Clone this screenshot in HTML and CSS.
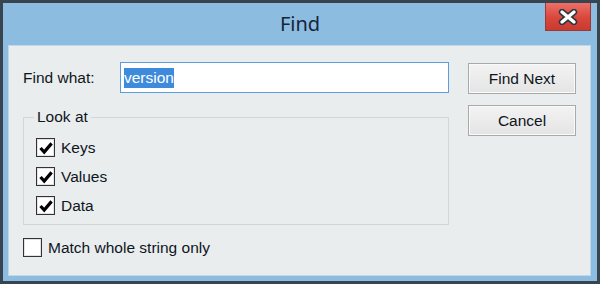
FILE: index.html
```html
<!DOCTYPE html>
<html>
<head>
    <title>Find</title>
    <link rel="stylesheet" href="styles.css">
</head>
<body>
    <div class="window">
        <div class="titlebar">
            <span></span>
            <span class="title">Find</span>
            <button class="close" title="Close">
                <svg width="20" height="16" viewBox="0 0 20 16">
                    <path d="M4 3 L16 13 M16 3 L4 13" stroke="#2b3540" stroke-width="6.4" stroke-linecap="round" fill="none"/>
                    <path d="M4 3 L16 13 M16 3 L4 13" stroke="#fff" stroke-width="3.4" stroke-linecap="round" fill="none"/>
                </svg>
            </button>
        </div>
        <div class="content">
            <div class="main">
                <div class="find-row">
                    <label class="find-label" for="findWhat">Find what:</label>
                    <div class="input"><span class="selected">version</span></div>
                </div>
                <fieldset class="group">
                    <legend>Look at</legend>
                    <div class="check"><span class="box on"></span>Keys</div>
                    <div class="check"><span class="box on"></span>Values</div>
                    <div class="check"><span class="box on"></span>Data</div>
                </fieldset>
                <div class="check match"><span class="box"></span>Match whole string only</div>
            </div>
            <div class="buttons">
                <button class="btn">Find Next</button>
                <button class="btn">Cancel</button>
            </div>
        </div>
    </div>
</body>
</html>
```

FILE: styles.css
```css
/* Find dialog */
html, body {
    margin: 0;
    padding: 0;
}
body {
    background-color: #38444f;
    width: 600px;
    height: 284px;
    overflow: hidden;
    font-family: 'Liberation Sans', Arial, sans-serif;
    font-size: 15.5px;
    color: #10151d;
}
.window {
    margin: 3px 3px 0 3px;
    height: 278px;
    background-color: #8dbce1;
    padding: 0 6px 5px 5px;
    box-sizing: border-box;
    display: flex;
    flex-direction: column;
}
.titlebar {
    height: 42px;
    margin: 0 -6px 0 -5px;
    padding-right: 6px;
    display: grid;
    grid-template-columns: 1fr auto 1fr;
    align-items: start;
}
.title {
    font-family: 'Noto Sans', sans-serif;
    font-size: 20px;
    color: #15253a;
    line-height: 42px;
    padding-left: 6px;
}
.close {
    justify-self: end;
    width: 46px;
    height: 28px;
    border: 1px solid #9a3a33;
    border-top: none;
    background: linear-gradient(#ec7167, #d9463c 55%, #c93a30);
    padding: 0;
    display: flex;
    align-items: center;
    justify-content: center;
}
.content {
    flex: 1;
    background-color: #e9edee;
    border: 1px solid #c5d7e6;
    padding: 16px 14px 0 14px;
    display: flex;
    gap: 19px;
}
.main {
    width: 426px;
}
.find-row {
    display: flex;
    align-items: center;
    height: 31px;
}
.find-label {
    width: 97px;
}
.input {
    flex: 1;
    height: 31px;
    box-sizing: border-box;
    border: 1px solid #5d9ddc;
    background-color: #fff;
    padding: 2px 3px;
    display: flex;
    align-items: center;
}
.selected {
    background-color: #3f8bdb;
    color: #fff;
    line-height: 20px;
}
.group {
    margin: 15px 0 0 0;
    padding: 12px 10px 9px 12px;
    border: 1px solid #d2d6d9;
    display: flex;
    flex-direction: column;
    gap: 10px;
}
.group legend {
    padding: 0 3px;
    margin-left: -2px;
    line-height: 18px;
}
.check {
    display: flex;
    align-items: center;
    gap: 6px;
    height: 19px;
}
.match {
    margin-top: 13px;
}
.box {
    width: 19px;
    height: 19px;
    box-sizing: border-box;
    border: 1.5px solid #333;
    background-color: #fff;
    box-shadow: inset 0 0 0 1px #e3e3e3;
}
.box.on {
    background: #fff url("data:image/svg+xml;utf8,<svg xmlns='http://www.w3.org/2000/svg' width='16' height='16' viewBox='0 0 16 16'><path d='M2.5 8 L6.2 12 L13.6 3.4' stroke='%23000' stroke-width='3.2' fill='none'/></svg>") center no-repeat;
}
.buttons {
    display: flex;
    flex-direction: column;
    gap: 11px;
    padding-top: 1px;
}
.btn {
    width: 108px;
    height: 31px;
    border: 1px solid #a9a9a9;
    background: linear-gradient(#f3f3f3, #e4e4e4);
    box-shadow: inset 0 0 0 1px #fafafa;
    font-family: 'Liberation Sans', Arial, sans-serif;
    font-size: 15.5px;
    color: #10151d;
    padding: 0;
}
```
